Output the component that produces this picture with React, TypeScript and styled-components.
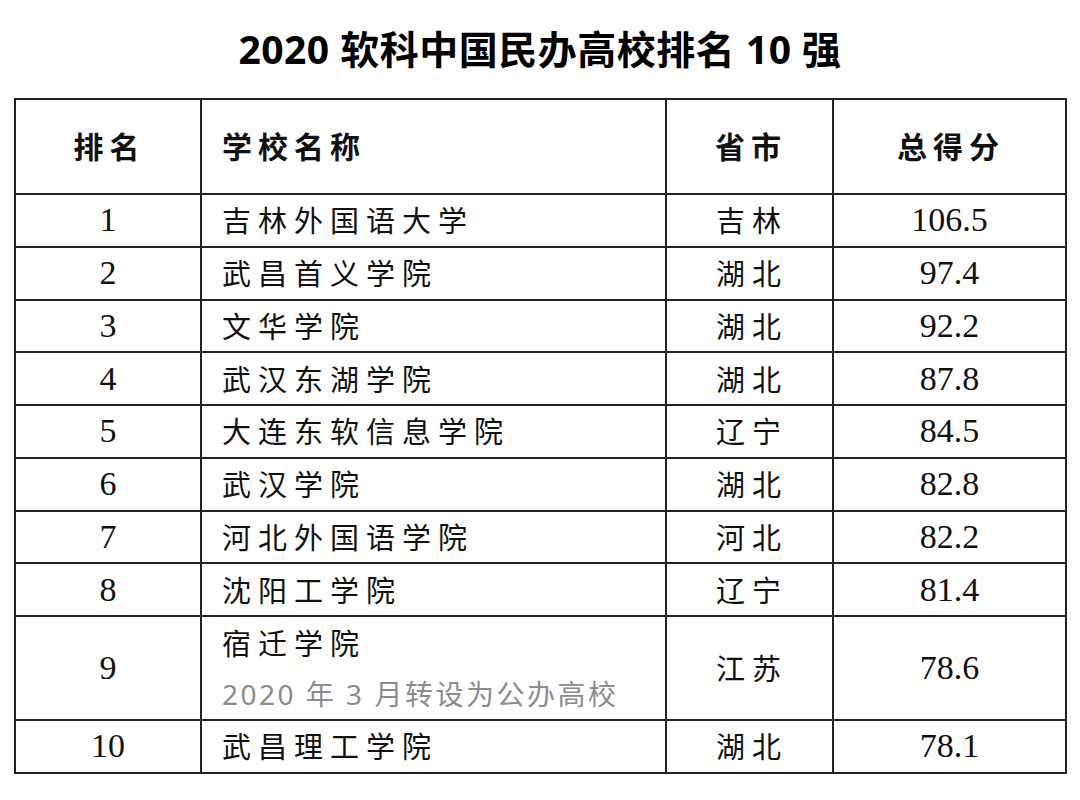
import React from "react";
import styled, { createGlobalStyle } from "styled-components";

const GlobalStyle = createGlobalStyle`
  html, body { margin: 0; padding: 0; background: #ffffff; }
  body { font-family: "Noto Sans CJK SC", "Noto Sans", sans-serif; color: #111; }
`;

const Page = styled.div`
  width: 1080px;
  height: 800px;
  background: #ffffff;
  display: flex;
  flex-direction: column;
  align-items: flex-start;
`;

const Title = styled.h1`
  margin: 0;
  width: 100%;
  height: 98px;
  padding-bottom: 4px;
  box-sizing: border-box;
  display: flex;
  align-items: center;
  justify-content: center;
  font-family: "Open Sans", "Noto Sans CJK SC", sans-serif;
  font-weight: 700;
  font-size: 39px;
  color: #000;
  letter-spacing: 0.5px;
`;

const Table = styled.table`
  margin-left: 14px;
  width: 1051px;
  border-collapse: collapse;
  table-layout: fixed;
  border: 2px solid #222;
`;

const HeadRow = styled.tr`
  height: 95px;
`;

const Row = styled.tr<{ $tall?: boolean }>`
  height: ${(p) => (p.$tall ? "104px" : "52.75px")};
`;

const HeadCell = styled.th<{ $align?: "left" | "center" }>`
  border: 2px solid #222;
  padding: 0 0 4px ${(p) => (p.$align === "left" ? "20px" : "3px")};
  text-align: ${(p) => p.$align ?? "center"};
  font-family: "Noto Sans CJK SC", sans-serif;
  font-weight: 700;
  font-size: 30px;
  letter-spacing: 6px;
  color: #111;
  vertical-align: middle;
`;

const NumCell = styled.td`
  border: 2px solid #222;
  padding: 0;
  text-align: center;
  font-family: "Liberation Serif", "Times New Roman", serif;
  font-size: 34px;
  color: #111;
  vertical-align: middle;
`;

const TextCell = styled.td<{ $align?: "left" | "center" }>`
  border: 2px solid #222;
  padding: 0 0 2px ${(p) => (p.$align === "left" ? "20px" : "5px")};
  text-align: ${(p) => p.$align ?? "center"};
  font-family: "Noto Sans CJK SC", sans-serif;
  font-weight: 400;
  font-size: 29px;
  letter-spacing: 7px;
  color: #111;
  vertical-align: middle;
  white-space: nowrap;
`;

const NameStack = styled.div`
  display: flex;
  flex-direction: column;
  gap: 10px;
`;

const Note = styled.span`
  font-family: "Noto Sans", "Noto Sans CJK SC", sans-serif;
  font-size: 28px;
  letter-spacing: 2.5px;
  color: #8c8c8c;
`;

type Item = { rank: number; name: string; prov: string; score: string; note?: string };

const data: Item[] = [
  { rank: 1, name: "吉林外国语大学", prov: "吉林", score: "106.5" },
  { rank: 2, name: "武昌首义学院", prov: "湖北", score: "97.4" },
  { rank: 3, name: "文华学院", prov: "湖北", score: "92.2" },
  { rank: 4, name: "武汉东湖学院", prov: "湖北", score: "87.8" },
  { rank: 5, name: "大连东软信息学院", prov: "辽宁", score: "84.5" },
  { rank: 6, name: "武汉学院", prov: "湖北", score: "82.8" },
  { rank: 7, name: "河北外国语学院", prov: "河北", score: "82.2" },
  { rank: 8, name: "沈阳工学院", prov: "辽宁", score: "81.4" },
  { rank: 9, name: "宿迁学院", prov: "江苏", score: "78.6", note: "2020 年 3 月转设为公办高校" },
  { rank: 10, name: "武昌理工学院", prov: "湖北", score: "78.1" },
];

export default function App() {
  return (
    <>
      <GlobalStyle />
      <Page>
        <Title>2020 软科中国民办高校排名 10 强</Title>
        <Table>
          <colgroup>
            <col style={{ width: "186px" }} />
            <col style={{ width: "465px" }} />
            <col style={{ width: "167px" }} />
            <col style={{ width: "233px" }} />
          </colgroup>
          <thead>
            <HeadRow>
              <HeadCell>排名</HeadCell>
              <HeadCell $align="left">学校名称</HeadCell>
              <HeadCell>省市</HeadCell>
              <HeadCell>总得分</HeadCell>
            </HeadRow>
          </thead>
          <tbody>
            {data.map((d) => (
              <Row key={d.rank} $tall={!!d.note}>
                <NumCell>{d.rank}</NumCell>
                <TextCell $align="left">
                  {d.note ? (
                    <NameStack>
                      <span>{d.name}</span>
                      <Note>{d.note}</Note>
                    </NameStack>
                  ) : (
                    d.name
                  )}
                </TextCell>
                <TextCell>{d.prov}</TextCell>
                <NumCell>{d.score}</NumCell>
              </Row>
            ))}
          </tbody>
        </Table>
      </Page>
    </>
  );
}
